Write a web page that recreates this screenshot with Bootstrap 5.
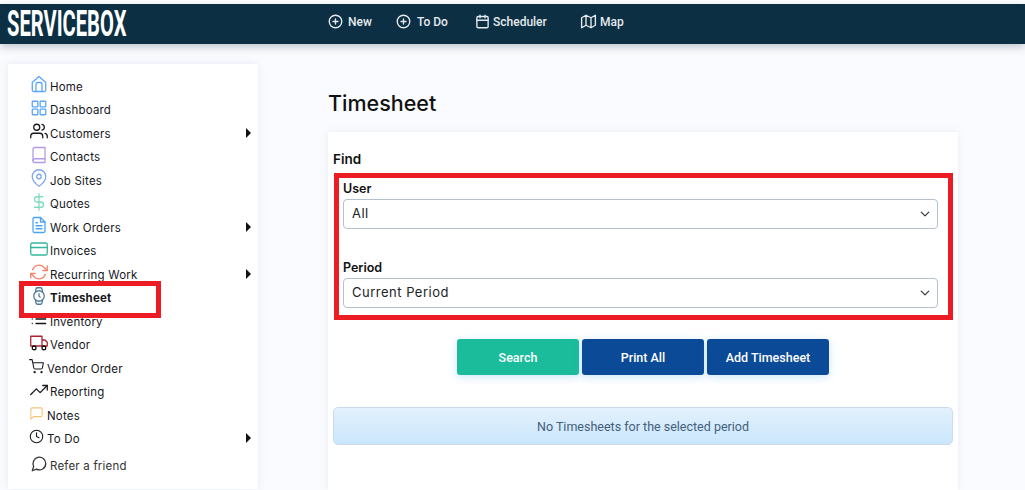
<!DOCTYPE html>
<html lang="en">
<head>
<meta charset="UTF-8">
<meta name="viewport" content="width=device-width, initial-scale=1.0">
<title>ServiceBox Timesheet</title>
<link href="https://cdn.jsdelivr.net/npm/bootstrap@5.3.0/dist/css/bootstrap.min.css" rel="stylesheet">
<style>
    html, body { height: 490px; overflow: hidden; }
    body { background: #fafbfe; font-family: Inter, "Open Sans", sans-serif; color: #111; padding-top: 4px; box-shadow: inset 0 4px 0 #fff; }
    .sb-top { height: 40px; background: #0c2f43; box-shadow: 0 3px 8px rgba(20, 40, 70, .25); padding: 0; flex-wrap: nowrap; justify-content: flex-start; align-items: flex-start; }
    .sb-logo { width: 328px; padding-left: 7px; color: #fff; font: 700 36px/41px "Roboto", sans-serif; white-space: nowrap; }
    .sb-logo span { display: inline-block; transform: scaleX(.56); transform-origin: left center; }
    .sb-links { height: 35px; }
    .sb-top .nav-link { font: 500 12px Roboto, sans-serif; color: #e4eaee; padding: 0; display: flex; align-items: center; gap: 5px; }
    .sb-top svg { width: 15px; height: 15px; fill: none; stroke: currentColor; stroke-width: 2.2; stroke-linecap: round; stroke-linejoin: round; }
    .sb-new { width: 68px; }
    .sb-todo { width: 79px; gap: 6px !important; }
    .sb-sched { width: 105px; gap: 3px !important; }
    .sb-map svg { width: 17px; height: 15px; }
    .sb-map { gap: 3px !important; }
    .sb-side { width: 250px; height: 425px; margin: 20px 0 0 8px; background: #fff; box-shadow: 0 0 8px rgba(120, 135, 190, .14); padding: 11.5px 0 0 21px; position: relative; flex: none; }
    .sb-item { height: 23.5px; display: flex; align-items: center; font-size: 11.5px; letter-spacing: .2px; color: #15171c; position: relative; text-decoration: none; }
    .sb-item svg { width: 18px; height: 18px; margin-top: -6px; flex: none; fill: none; stroke: currentColor; stroke-width: 1.7; stroke-linecap: round; stroke-linejoin: round; }
    .sb-item .sb-ico { width: 21px; display: flex; justify-content: center; margin-left: -1px; margin-right: 1px; }
    .sb-tight .sb-ico { width: 16px; justify-content: flex-start; margin-left: 0; margin-right: 2px; }
    .sb-tight svg { width: 15px; height: 15px; }
    .sb-item b { font-weight: 700; }
    .sb-arrow { position: absolute; left: 217px; top: 5px; width: 0; height: 0; border-left: 5px solid #111; border-top: 5px solid transparent; border-bottom: 5px solid transparent; }
    .sb-refer { margin-top: 3.5px; color: #333; }
    .sb-mark { position: absolute; left: 11px; top: 217px; width: 142px; height: 37px; border: 5px solid #ed1c24; }
    .sb-main { width: 630px; margin-left: 70px; flex: none; }
    .sb-title { font-size: 21.5px; font-weight: 500; margin: 47px 0 17px; line-height: 24px; color: #111; }
    .sb-panel { height: 358px; background: #fff; box-shadow: 0 0 8px rgba(120, 135, 190, .12); padding: 18px 5px 0; }
    .sb-find { font-size: 13.5px; font-weight: 600; line-height: 18px; margin-bottom: 5px; }
    .sb-box { width: 619px; height: 147px; margin-left: 1px; border: 5px solid #ed1c24; padding: 2px 10px 0 4px; }
    .sb-label { display: block; font-size: 12.5px; font-weight: 600; line-height: 18px; margin: 0 0 1px; }
    .sb-select { height: 30px; width: 595px; font-size: 13px; letter-spacing: .5px; padding: 0 30px 0 8px; border-color: #b3c2cd; border-radius: 4px; color: #222; margin-bottom: 30px; background-position: right 6px center; background-size: 12px 10px; }
    .sb-btns { margin-top: 19px; gap: 3px; }
    .sb-btn { width: 122px; height: 36px; font: 500 12.5px Roboto, sans-serif; color: #fff; border: 0; border-radius: 3px; padding: 0; box-shadow: 0 2px 8px rgba(60, 170, 230, .28); }
    .sb-green { background: #1abc9c; }
    .sb-blue { background: #0a4a97; }
    .sb-note { width: 620px; height: 38px; margin: 32px 0 0; padding: 0; display: flex; align-items: center; justify-content: center; border: 1px solid #cbdbe9; border-radius: 5px; background: linear-gradient(#e3f1fc, #cae6fc); font: 400 12.5px Roboto, sans-serif; color: #43607b; }
</style>
</head>
<body>

<nav class="navbar sb-top">
    <a class="sb-logo text-decoration-none" href="#"><span>SERVICEBOX</span></a>
    <div class="d-flex align-items-center sb-links">
        <a class="nav-link sb-new" href="#"><svg viewBox="0 0 24 24"><circle cx="12" cy="12" r="10"/><path d="M12 8v8M8 12h8"/></svg>New</a>
        <a class="nav-link sb-todo" href="#"><svg viewBox="0 0 24 24"><circle cx="12" cy="12" r="10"/><path d="M12 8v8M8 12h8"/></svg>To Do</a>
        <a class="nav-link sb-sched" href="#"><svg viewBox="0 0 24 24"><rect x="3" y="4" width="18" height="18" rx="2"/><path d="M16 2v4M8 2v4M3 10h18"/></svg>Scheduler</a>
        <a class="nav-link sb-map" href="#"><svg viewBox="0 0 24 24"><path d="M1 6v16l7-4 8 4 7-4V2l-7 4-8-4-7 4zM8 2v16M16 6v16"/></svg>Map</a>
    </div>
</nav>

<div class="d-flex">
    <aside class="sb-side">
        <a class="sb-item" href="#"><span class="sb-ico" style="color:#5aa5f5"><svg viewBox="0 0 24 24"><path d="M3 10l9-8 9 8v10a2 2 0 0 1-2 2H5a2 2 0 0 1-2-2z"/><path d="M8 22V12a2 2 0 0 1 2-2h4a2 2 0 0 1 2 2v10"/></svg></span>Home</a>
        <a class="sb-item" href="#"><span class="sb-ico" style="color:#5aa5f5"><svg viewBox="0 0 24 24"><rect x="3" y="3" width="7.500" height="7.500" rx="1"/><rect x="13.500" y="3" width="7.500" height="7.500" rx="1"/><rect x="13.500" y="13.500" width="7.500" height="7.500" rx="1"/><rect x="3" y="13.500" width="7.500" height="7.500" rx="1"/></svg></span>Dashboard</a>
        <a class="sb-item" href="#"><span class="sb-ico"><svg viewBox="0 0 24 24"><path d="M17 21v-2a4 4 0 0 0-4-4H5a4 4 0 0 0-4 4v2"/><circle cx="9" cy="7" r="4"/><path d="M23 21v-2a4 4 0 0 0-3-3.900M16 3.100a4 4 0 0 1 0 7.800"/></svg></span>Customers<i class="sb-arrow"></i></a>
        <a class="sb-item" href="#"><span class="sb-ico" style="color:#b39ae8"><svg viewBox="0 0 24 24"><path d="M4 19.500A2.500 2.500 0 0 1 6.500 17H20"/><path d="M6.500 2H20v20H6.500A2.500 2.500 0 0 1 4 19.500v-15A2.500 2.500 0 0 1 6.500 2z"/></svg></span>Contacts</a>
        <a class="sb-item" href="#"><span class="sb-ico" style="color:#7ba7ee"><svg viewBox="0 0 24 24"><path d="M21 10c0 7-9 13-9 13s-9-6-9-13a9 9 0 0 1 18 0z"/><circle cx="12" cy="10" r="3"/></svg></span>Job Sites</a>
        <a class="sb-item" href="#"><span class="sb-ico" style="color:#7fdcbc"><svg viewBox="0 0 24 24"><path d="M12 1v22M17 5H9.500a3.500 3.500 0 0 0 0 7h5a3.500 3.500 0 0 1 0 7H6"/></svg></span>Quotes</a>
        <a class="sb-item" href="#"><span class="sb-ico" style="color:#4aa3f5"><svg viewBox="0 0 24 24"><path d="M14 2H6a2 2 0 0 0-2 2v16a2 2 0 0 0 2 2h12a2 2 0 0 0 2-2V8z"/><path d="M14 2v6h6M16 13H8M16 17H8M10 9H8"/></svg></span>Work Orders<i class="sb-arrow"></i></a>
        <a class="sb-item" href="#"><span class="sb-ico" style="color:#33b89a"><svg viewBox="0 0 24 24"><rect x="1" y="4" width="22" height="16" rx="2"/><path d="M1 10h22"/></svg></span>Invoices</a>
        <a class="sb-item" href="#"><span class="sb-ico" style="color:#f5826a"><svg viewBox="0 0 24 24"><path d="M23 4v6h-6M1 20v-6h6"/><path d="M3.500 9a9 9 0 0 1 14.900-3.400L23 10M1 14l4.600 4.400A9 9 0 0 0 20.500 15"/></svg></span>Recurring Work<i class="sb-arrow"></i></a>
        <a class="sb-item" href="#"><span class="sb-ico" style="color:#4a7a9a"><svg viewBox="0 0 24 24"><circle cx="12" cy="12" r="7"/><path d="M12 9v3l1.500 1.500M16.500 17.300l-.4 3.800a2 2 0 0 1-2 1.900H9.900a2 2 0 0 1-2-1.900l-.4-3.800M7.500 6.700l.4-3.800a2 2 0 0 1 2-1.900h4.200a2 2 0 0 1 2 1.900l.4 3.800"/></svg></span><b>Timesheet</b></a>
        <a class="sb-item" href="#"><span class="sb-ico"><svg viewBox="0 0 24 24"><path d="M8 6h13M8 12h13M8 18h13M3 6h.01M3 12h.01M3 18h.01"/></svg></span>Inventory</a>
        <a class="sb-item" href="#"><span class="sb-ico" style="color:#b0202c"><svg viewBox="0 0 24 24"><path d="M1 3h15v13H1zM16 8h4l3 3v5h-7z"/><circle cx="5.500" cy="18.500" r="2.500" stroke="#111"/><circle cx="18.500" cy="18.500" r="2.500" stroke="#111"/></svg></span>Vendor</a>
        <a class="sb-item sb-tight" href="#"><span class="sb-ico"><svg viewBox="0 0 24 24"><circle cx="9" cy="21" r="1"/><circle cx="20" cy="21" r="1"/><path d="M1 1h4l2.700 13.400a2 2 0 0 0 2 1.600h9.700a2 2 0 0 0 2-1.600L23 6H6"/></svg></span>Vendor Order</a>
        <a class="sb-item" href="#"><span class="sb-ico"><svg viewBox="0 0 24 24"><path d="M23 6l-9.500 9.500-5-5L1 18"/><path d="M17 6h6v6"/></svg></span>Reporting</a>
        <a class="sb-item sb-tight" href="#"><span class="sb-ico" style="color:#f5c27a"><svg viewBox="0 0 24 24"><path d="M21 15a2 2 0 0 1-2 2H7l-4 4V5a2 2 0 0 1 2-2h14a2 2 0 0 1 2 2z"/></svg></span>Notes</a>
        <a class="sb-item sb-tight" href="#"><span class="sb-ico"><svg viewBox="0 0 24 24"><circle cx="12" cy="12" r="10"/><path d="M12 6v6l4 2"/></svg></span>To Do<i class="sb-arrow"></i></a>
        <a class="sb-item sb-refer" href="#"><span class="sb-ico"><svg viewBox="0 0 24 24"><path d="M21 11.500a8.400 8.400 0 0 1-12.300 7.400L3 21l1.900-5.700A8.500 8.500 0 1 1 21 11.500z"/></svg></span>Refer a friend</a>
        <div class="sb-mark"></div>
    </aside>

    <main class="sb-main">
        <h1 class="sb-title">Timesheet</h1>
        <div class="sb-panel">
            <div class="sb-find">Find</div>
            <div class="sb-box">
                <label class="sb-label" for="userSel">User</label>
                <select class="form-select sb-select" id="userSel"><option>All</option></select>
                <label class="sb-label" for="periodSel">Period</label>
                <select class="form-select sb-select" id="periodSel"><option>Current Period</option></select>
            </div>
            <div class="d-flex justify-content-center sb-btns">
                <button class="btn sb-btn sb-green">Search</button>
                <button class="btn sb-btn sb-blue">Print All</button>
                <button class="btn sb-btn sb-blue">Add Timesheet</button>
            </div>
            <div class="alert sb-note" role="alert">No Timesheets for the selected period</div>
        </div>
    </main>
</div>

<script src="https://cdn.jsdelivr.net/npm/bootstrap@5.3.0/dist/js/bootstrap.bundle.min.js"></script>
</body>
</html>
